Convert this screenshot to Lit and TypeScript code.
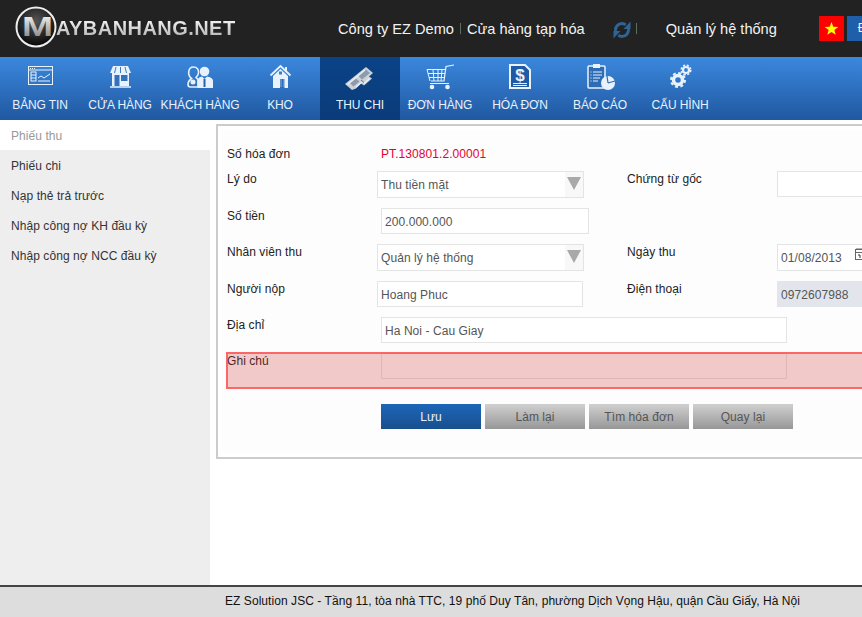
import { css, html, LitElement, svg } from "lit";
import { customElement } from "lit/decorators.js";

const icons = {
  board: svg`<rect x="4.500" y="3.500" width="24" height="18" fill="none" stroke="currentColor"/><path d="M5 7h23" stroke="currentColor"/><path d="M6 5.500h1M8 5.500h1M10 5.500h1" stroke="currentColor"/><rect x="7" y="9" width="5" height="9" fill="none" stroke="currentColor"/><path d="M7 12h5M7 15h5" stroke="currentColor"/><path d="M14 15l3-2 3 2 6-4M14 18h12" fill="none" stroke="currentColor"/>`,
  shop: svg`<path d="M9 3h15l3 7H6z" fill="currentColor"/><path d="M12 4l-1.500 6M16.500 4v6M21 4l1.500 6" stroke="#3a7cc8"/><rect x="8" y="10" width="17" height="13" fill="currentColor"/><rect x="10.500" y="12" width="5" height="11" fill="#3272bd"/><rect x="17" y="12" width="6.500" height="6" fill="#3272bd"/><path d="M6 24h21" stroke="currentColor" stroke-width="1.500"/>`,
  people: svg`<path d="M9.500 4c3.500 0 5.500 2.500 5 6-.3 2-1.500 3.500-2.500 4.500l2 2V24H6.500c-2 0-2.500-1-2.500-2.500 0-2.500 1.500-4.500 3.500-6-2-1.500-3-4-2.800-6.500.3-3 2-5 4.800-5z" fill="none" stroke="currentColor" stroke-width="1.600"/><circle cx="20.500" cy="8.500" r="4.800" fill="currentColor"/><path d="M13.500 25v-7c0-3 2.500-4 4.500-4.500l2.500 2.500 2.500-2.500c2.500.5 6 1.500 6 4.500v7z" fill="currentColor"/><path d="M20.500 16v8" stroke="#2a62a8" stroke-width="2"/><circle cx="9" cy="19" r="2.500" fill="currentColor"/>`,
  house: svg`<path d="M6.500 12.500L16.500 3l10 9.500" fill="none" stroke="currentColor" stroke-width="1.800"/><path d="M9 13l7.500-7 7.500 7v12H9z" fill="currentColor"/><rect x="21" y="4" width="2" height="4" fill="currentColor"/><rect x="15" y="8.500" width="3" height="3" fill="#3a7cc8"/><rect x="16" y="16" width="4.500" height="9" fill="#2f6cb6"/><path d="M17 16v8M20 16v8" stroke="currentColor" stroke-width=".5"/>`,
  money: svg`<path d="M1 21L22 4l7 6-4 3.500 3 2-8 7-3-2-5 5-4 1.500z" fill="#cbd2d9"/><path d="M14 12.500l8-6 4 3.500-8 6.500zM6 20l6-4.500 3.500 3-6 5z" fill="#8f9baa"/><path d="M3.500 21.500L21 7M12 24l6-5M20 20.500l5.500-5" stroke="#f0f3f6" stroke-width="1.100"/><path d="M17 17l3 2.500" stroke="#66727f"/>`,
  cart: svg`<path d="M30 2l-8 1.500-2 14.500H7" fill="none" stroke="currentColor" stroke-width="1.200"/><path d="M3 6.500h18.500M4 10.500h17M5 14.500h15.500M3 6.500l3 11.500M9 6.500l1 11.500M14 6.500v11.500M18 6.500l-1 11.500M6 20.500h19" fill="none" stroke="currentColor"/><circle cx="8" cy="24" r="2.300" fill="currentColor"/><circle cx="23.500" cy="24" r="2.300" fill="currentColor"/>`,
  invoice: svg`<path d="M6 2h15l5 5v18H6z" fill="#1f5aa6" stroke="currentColor" stroke-width="2"/><text x="16" y="18" text-anchor="middle" font-family="Liberation Sans" font-weight="bold" font-size="17" fill="currentColor">$</text><path d="M9 20.500h14M9 22.500h14" stroke="currentColor"/>`,
  report: svg`<rect x="4" y="3" width="17" height="22" rx="1" fill="#2f6cb6" stroke="currentColor" stroke-width="1.500"/><rect x="9" y="1" width="7" height="4" fill="currentColor"/><path d="M9 9h9M9 12h9M9 15h7M9 18h5M6.500 9h1M6.500 12h1M6.500 15h1M6.500 18h1" stroke="currentColor"/><circle cx="24" cy="20" r="7" fill="currentColor"/><path d="M24 20l-1-7M24 20l7-2" stroke="#2f6cb6" stroke-width="1.200"/>`,
  gears: svg`<circle cx="14" cy="17" r="4.500" fill="none" stroke="currentColor" stroke-width="3.500"/><circle cx="14" cy="17" r="7" fill="none" stroke="currentColor" stroke-width="2" stroke-dasharray="3 2.500"/><circle cx="22" cy="7" r="3" fill="none" stroke="currentColor" stroke-width="2.200"/><circle cx="22" cy="7" r="4.800" fill="none" stroke="currentColor" stroke-width="1.500" stroke-dasharray="2.200 1.600"/>`,
};

const navItems = [
  { label: "BẢNG TIN", icon: icons.board },
  { label: "CỬA HÀNG", icon: icons.shop },
  { label: "KHÁCH HÀNG", icon: icons.people },
  { label: "KHO", icon: icons.house },
  { label: "THU CHI", icon: icons.money, active: true },
  { label: "ĐƠN HÀNG", icon: icons.cart },
  { label: "HÓA ĐƠN", icon: icons.invoice },
  { label: "BÁO CÁO", icon: icons.report },
  { label: "CẤU HÌNH", icon: icons.gears },
];

const sideItems = [
  "Phiếu thu",
  "Phiếu chi",
  "Nạp thẻ trả trước",
  "Nhập công nợ KH đầu kỳ",
  "Nhập công nợ NCC đầu kỳ",
];

@customElement("app-root")
export class AppRoot extends LitElement {
  static styles = css`
    :host {
      display: flex;
      flex-direction: column;
      height: 617px;
      width: 862px;
      overflow: hidden;
      background: #fff;
      font-family: "Liberation Sans", Arial, sans-serif;
      font-size: 12px;
      letter-spacing: 0.07px;
      color: #222;
    }

    .top {
      display: flex;
      align-items: center;
      flex: none;
      height: 57px;
      background: #222;
      color: #f2f2f2;
      font-size: 14.6px;
      letter-spacing: 0;
      white-space: nowrap;
    }

    .logo {
      display: flex;
      align-items: center;
      flex: none;
      width: 338px;
      padding-left: 15px;
      box-sizing: border-box;
    }

    .logo svg {
      flex: none;
      display: block;
      margin-top: -3px;
    }

    .logo span {
      margin-left: -1px;
      font-size: 20px;
      font-weight: bold;
      letter-spacing: 0.45px;
      background: linear-gradient(#ffffff, #a9a9a9);
      -webkit-background-clip: text;
      background-clip: text;
      color: transparent;
    }

    .sep {
      width: 1px;
      height: 11px;
      background: #5c6e5c;
      flex: none;
    }

    .top .company {
      margin-right: 6px;
    }

    .top .store {
      margin-left: 6px;
    }

    .sync {
      display: block;
      flex: none;
      margin: 2px 5px 0 28px;
    }

    .top .admin {
      margin-left: 29px;
    }

    .flag {
      display: block;
      flex: none;
      margin-left: 42px;
    }

    .lang {
      flex: none;
      width: 60px;
      height: 25px;
      margin-left: 3px;
      padding-left: 11px;
      box-sizing: border-box;
      background: #1f5ea8;
      line-height: 25px;
      font-size: 12px;
    }

    nav {
      display: flex;
      flex: none;
      height: 63px;
      background: linear-gradient(#3b88de, #2058a0);
    }

    nav a {
      display: flex;
      flex-direction: column;
      align-items: center;
      flex: none;
      width: 80px;
      color: #e8f2fc;
      letter-spacing: -0.12px;
      white-space: nowrap;
    }

    nav a.active {
      background: linear-gradient(#0a4386, #0b3b7a);
    }

    nav svg {
      display: block;
      margin-top: 6px;
    }

    nav span {
      margin-top: 7px;
      line-height: 14px;
    }

    .body {
      display: flex;
      flex: 1;
      min-height: 0;
    }

    aside {
      flex: none;
      width: 210px;
      background: #eee;
    }

    aside div {
      height: 30px;
      padding-left: 11px;
      line-height: 32px;
      color: #333;
    }

    aside div.current {
      background: #fff;
      color: #999;
    }

    .panel {
      flex: none;
      align-self: flex-start;
      width: 760px;
      height: 323px;
      margin: 4px 0 0 6px;
      border: 2px solid #ccc;
      padding: 4px;
      background: #fff;
    }

    form {
      box-sizing: border-box;
      height: 100%;
      padding: 16px 0 0 5px;
      background: #fdfdfd;
    }

    .row {
      position: relative;
      display: flex;
      height: 36px;
    }

    .row.tall {
      height: 37px;
    }

    .row.head {
      height: 25px;
      padding-top: 1px;
      box-sizing: border-box;
      line-height: 15px;
    }

    .row.addr {
      height: 35px;
    }

    .cell {
      display: flex;
      flex: none;
      width: 400px;
    }

    label {
      flex: none;
      width: 150px;
      padding-top: 1px;
      line-height: 15px;
    }

    .head label {
      padding-top: 0;
    }

    .error label {
      padding-top: 2px;
    }

    .code {
      margin-left: 4px;
      color: #e8002d;
    }

    .field {
      flex: none;
      box-sizing: border-box;
      width: 206px;
      height: 26px;
      padding-left: 3px;
      border: 1px solid #e4e4e4;
      background: #fff;
      color: #555;
      line-height: 27px;
      white-space: nowrap;
    }

    .field.shift {
      margin-left: 4px;
      width: 208px;
    }

    .field.shift.wide {
      width: 406px;
    }

    .field.side {
      position: relative;
      width: 150px;
    }

    .field.high {
      height: 27px;
    }

    .field.filled {
      background: #e2e5ec;
      border-color: #e2e5ec;
    }

    .field.pick {
      display: flex;
      justify-content: space-between;
      width: 207px;
      height: 27px;
    }

    .arrow {
      display: flex;
      justify-content: center;
      flex: none;
      box-sizing: border-box;
      width: 18px;
      padding-top: 5px;
      background: #f8f8f8;
    }

    .arrow i {
      width: 0;
      height: 0;
      border-left: 7px solid transparent;
      border-right: 7px solid transparent;
      border-top: 13px solid #a9a9a9;
    }

    .calendar {
      position: absolute;
      left: 76px;
      top: 2px;
    }

    .note {
      height: 26px;
      margin-top: 1px;
      background: transparent;
    }

    .row.error::after {
      content: "";
      position: absolute;
      left: -1px;
      top: 0;
      width: 700px;
      height: 33px;
      border: 2px solid rgba(255, 60, 60, 0.7);
      background: rgba(213, 49, 49, 0.25);
    }

    .actions {
      display: flex;
      gap: 4px;
      margin: 15px 0 0 154px;
    }

    button {
      width: 100px;
      height: 25px;
      padding: 0;
      border: 0;
      background: linear-gradient(#d0d0d0, #979797);
      color: #555;
      font: inherit;
      letter-spacing: inherit;
    }

    button.primary {
      background: linear-gradient(#1c66b8, #1a4f8e);
      color: #e8f2fc;
    }

    footer {
      flex: none;
      box-sizing: border-box;
      height: 32px;
      padding-left: 225px;
      border-top: 2px solid #444;
      background: #ddd;
      color: #111;
      letter-spacing: 0.06px;
      line-height: 29px;
      white-space: nowrap;
    }
  `;

  render() {
    return html`
      <header class="top">
        <div class="logo">
          <svg width="42" height="42" viewBox="0 0 42 42">
            <defs>
              <radialGradient id="ball" cx="0.5" cy="0.35" r="0.7">
                <stop offset="0" stop-color="#555" />
                <stop offset="1" stop-color="#000" />
              </radialGradient>
              <linearGradient id="silver" x1="0" y1="0" x2="0" y2="1">
                <stop offset="0" stop-color="#fff" />
                <stop offset="1" stop-color="#777" />
              </linearGradient>
            </defs>
            <circle cx="21" cy="21" r="19.500" fill="url(#ball)" stroke="#eee" stroke-width="2" />
            <text x="7" y="30" textLength="31" lengthAdjust="spacingAndGlyphs" font-family="Liberation Sans" font-weight="bold" font-size="27" fill="url(#silver)">M</text>
          </svg>
          <span>AYBANHANG.NET</span>
        </div>
        <span class="company">Công ty EZ Demo</span>
        <i class="sep"></i>
        <span class="store">Cửa hàng tạp hóa</span>
        <svg class="sync" width="18" height="20" viewBox="0 0 18 20" fill="none" stroke="#2f6494" stroke-width="3">
          <path d="M2.500 11c-.5-4 2.500-7.500 6.500-7.500 1.500 0 2.700.5 3.700 1.300" />
          <path d="M15.500 9c.5 4-2.500 7.500-6.500 7.500-1.500 0-2.700-.5-3.700-1.300" />
          <path d="M10.500 9h7V1.500z" fill="#2f6494" stroke="none" />
          <path d="M7.500 11H.5v7.500z" fill="#2f6494" stroke="none" />
        </svg>
        <i class="sep"></i>
        <span class="admin">Quản lý hệ thống</span>
        <svg class="flag" width="25" height="25" viewBox="0 0 25 25">
          <rect width="25" height="25" fill="#f00" />
          <path d="M12.500 6l1.800 4.700 5 .2-3.900 3.100 1.300 4.800-4.200-2.700-4.200 2.700 1.300-4.800-3.900-3.100 5-.2z" fill="#ff0" />
        </svg>
        <div class="lang">Đ</div>
      </header>

      <nav>
        ${navItems.map(
          (item) => html`
            <a class=${item.active ? "active" : ""}>
              <svg width="32" height="28" viewBox="0 0 32 28">${item.icon}</svg>
              <span>${item.label}</span>
            </a>
          `
        )}
      </nav>

      <div class="body">
        <aside>
          ${sideItems.map(
            (item, i) => html`<div class=${i === 0 ? "current" : ""}>${item}</div>`
          )}
        </aside>

        <section class="panel">
          <form>
            <div class="row head">
              <div class="cell">
                <label>Số hóa đơn</label>
                <span class="code">PT.130801.2.00001</span>
              </div>
            </div>

            <div class="row tall">
              <div class="cell">
                <label>Lý do</label>
                <div class="field pick">Thu tiền mặt<span class="arrow"><i></i></span></div>
              </div>
              <div class="cell">
                <label>Chứng từ gốc</label>
                <div class="field side"></div>
              </div>
            </div>

            <div class="row">
              <div class="cell">
                <label>Số tiền</label>
                <div class="field shift">200.000.000</div>
              </div>
            </div>

            <div class="row tall">
              <div class="cell">
                <label>Nhân viên thu</label>
                <div class="field pick">Quản lý hệ thống<span class="arrow"><i></i></span></div>
              </div>
              <div class="cell">
                <label>Ngày thu</label>
                <div class="field side high">
                  01/08/2013
                  <svg class="calendar" width="14" height="14" viewBox="0 0 14 14" fill="none" stroke="#666">
                    <rect x="1.500" y="2.500" width="11" height="10" />
                    <path d="M1.500 5.500h11M3 1v2M5 1v2M7 1v2M9 1v2M11 1v2" />
                    <path d="M4 8h2v3M8 8h1v3" stroke="#333" />
                  </svg>
                </div>
              </div>
            </div>

            <div class="row">
              <div class="cell">
                <label>Người nộp</label>
                <div class="field">Hoang Phuc</div>
              </div>
              <div class="cell">
                <label>Điện thoại</label>
                <div class="field side filled">0972607988</div>
              </div>
            </div>

            <div class="row addr">
              <div class="cell">
                <label>Địa chỉ</label>
                <div class="field shift wide">Ha Noi - Cau Giay</div>
              </div>
            </div>

            <div class="row tall error">
              <div class="cell">
                <label>Ghi chú</label>
                <div class="field shift wide note"></div>
              </div>
            </div>

            <div class="actions">
              <button type="button" class="primary">Lưu</button>
              <button type="button">Làm lại</button>
              <button type="button">Tìm hóa đơn</button>
              <button type="button">Quay lại</button>
            </div>
          </form>
        </section>
      </div>

      <footer>EZ Solution JSC - Tầng 11, tòa nhà TTC, 19 phố Duy Tân, phường Dịch Vọng Hậu, quận Cầu Giấy, Hà Nội</footer>
    `;
  }
}
